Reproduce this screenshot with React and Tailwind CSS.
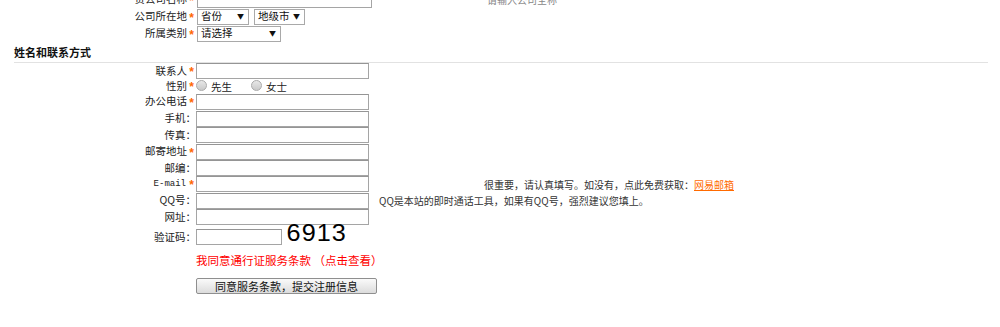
import React from 'react';

const font = "font-['Noto_Sans_CJK_SC','Noto_Sans',sans-serif]";

function Row({ label, star, h, children, hint }) {
  return (
    <div className={`flex items-center ${h}`}>
      <div className="w-[196px] shrink-0 flex justify-end items-center text-[10.5px] text-[#222] leading-none">
        {label}
        {star && <span className="w-[9px] text-center text-[#ff6600] text-[12px] font-bold font-['Liberation_Sans',sans-serif] pt-[2px]">*</span>}
      </div>
      <div className="flex items-center">{children}</div>
      {hint}
    </div>
  );
}

function Input({ w = 'w-[173px]' }) {
  return <div className={`${w} h-[16px] bg-white border border-[#a5a5a5] border-t-[#959595]`} />;
}

function Select({ w, text, ml = '' }) {
  return (
    <div className={`${w} ${ml} h-[16px] border border-[#a9a9a9] bg-white flex items-center justify-between pl-[3px] pr-[4px] text-[10.5px] text-[#111] leading-none`}>
      <span>{text}</span>
      <span className="text-[7px]">▼</span>
    </div>
  );
}

export default function App() {
  return (
    <div className={`w-[1000px] h-[327px] overflow-hidden bg-white ${font}`}>
      <div className="-mt-[9px]">
        <Row
          label="贵公司名称"
          star
          h="h-[17px]"
          hint={<span className="ml-[115px] text-[10px] text-[#888]">请输入公司全称</span>}
        >
          <div className="pl-px"><Input w="w-[175px]" /></div>
        </Row>
        <Row label="公司所在地" star h="h-[17px]">
          <div className="pl-px flex">
            <Select w="w-[52px]" text="省份" />
            <Select w="w-[51px]" ml="ml-[5px]" text="地级市" />
          </div>
        </Row>
        <Row label="所属类别" star h="h-[17px]">
          <div className="pl-px"><Select w="w-[84px]" text="请选择" /></div>
        </Row>

        <div className="h-[20px] flex items-center pl-[14px] pt-[1px] text-[11px] font-bold text-[#111]">姓名和联系方式</div>
        <div className="ml-[14px] w-[974px] h-px bg-[#e2e2e2]" />

        <Row label="联系人" star h="h-[16px]"><Input /></Row>
        <Row label="性别" star h="h-[14px]">
          <div className="flex items-start h-[14px] text-[10.5px] text-[#222] leading-none">
            <span className="mt-px w-[11px] h-[11px] rounded-full border border-[#aaa] bg-gradient-to-b from-[#e8e8e8] to-[#c9c9c9]" />
            <span className="ml-[4px] mt-[3px]">先生</span>
            <span className="ml-[19px] mt-px w-[11px] h-[11px] rounded-full border border-[#aaa] bg-gradient-to-b from-[#e8e8e8] to-[#c9c9c9]" />
            <span className="ml-[4px] mt-[3px]">女士</span>
          </div>
        </Row>
        <Row label="办公电话" star h="h-[17px]"><Input /></Row>
        <Row label="手机：" h="h-[17px]"><Input /></Row>
        <Row label="传真：" h="h-[16px]"><Input /></Row>
        <Row label="邮寄地址" star h="h-[17px]"><Input /></Row>
        <Row label="邮编：" h="h-[16px]"><Input /></Row>
        <Row
          label={<span className="font-['Liberation_Mono',monospace] text-[9px] mr-px">E-mail</span>}
          star
          h="h-[16px]"
          hint={
            <span className="ml-[115px] text-[10px] text-[#333] whitespace-nowrap">
              很重要，请认真填写。如没有，点此免费获取：
              <span className="text-[#ff6a00] underline">网易邮箱</span>
            </span>
          }
        >
          <Input />
        </Row>
        <Row
          label="QQ号："
          h="h-[17px]"
          hint={<span className="ml-[10px] text-[10px] text-[#333] whitespace-nowrap">QQ是本站的即时通话工具，如果有QQ号，强烈建议您填上。</span>}
        >
          <Input />
        </Row>
        <Row label="网址：" h="h-[16px]"><Input /></Row>
        <Row label="验证码：" h="h-[24px]">
          <Input w="w-[86px]" />
          <span className="ml-[6px] mb-[8px] font-['Liberation_Sans',sans-serif] text-[24px] leading-none text-black tracking-[1px] scale-x-[1.05]">6913</span>
        </Row>

        <div className="h-[24px] flex items-center pl-[196px] text-[11.5px] text-[#ff0000] leading-none">
          我同意通行证服务条款 （点击查看）
        </div>
        <div className="h-[26px] flex items-center pl-[196px]">
          <button className="w-[181px] h-[16px] border border-[#8f8f8f] rounded-[2px] bg-gradient-to-b from-[#fafafa] to-[#dcdcdc] text-[11px] text-[#111] leading-none">
            同意服务条款，提交注册信息
          </button>
        </div>
      </div>
    </div>
  );
}
